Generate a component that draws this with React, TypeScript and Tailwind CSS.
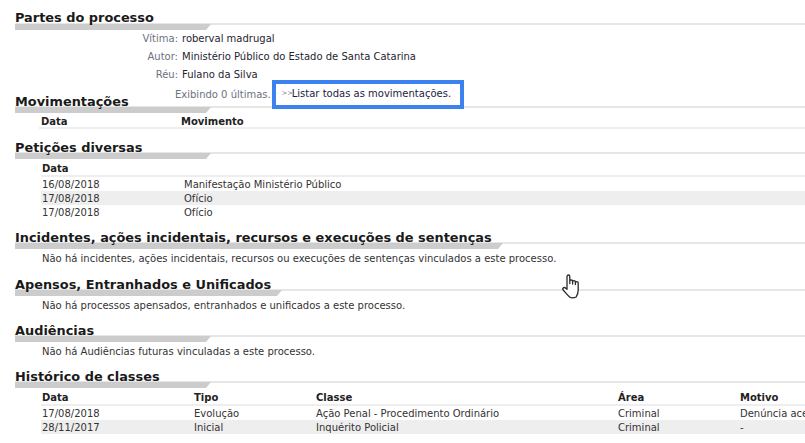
const font = "font-['DejaVu_Sans','Liberation_Sans',sans-serif]";

function Heading({ title, barClass, first }: { title: string; barClass: string; first?: boolean }) {
  return (
    <div className="relative h-[20px] pl-[15px]">
      <div className={`absolute top-[13px] right-0 left-[15px] h-[2px] bg-[#e6e6e6]`} />
      <div className={`absolute top-[14px] left-[15px] h-[6px] bg-[#cccccc] [clip-path:polygon(0_0,100%_0,calc(100%-5px)_100%,0_100%)] ${barClass}`} />
      <h2 className={`relative text-[12.9px] font-bold leading-[15px] text-[#1a1a1a] ${first ? "" : "pt-[1px]"}`}>{title}</h2>
    </div>
  );
}

function Party({ label, name }: { label: string; name: string }) {
  return (
    <div className="flex h-[18px] items-center">
      <span className="w-[178px] text-right text-[#6b7280]">{label}</span>
      <span className="ml-[4px] text-[#1f2430]">{name}</span>
    </div>
  );
}

function Note({ children }: { children: string }) {
  return <p className="mt-[3px] pl-[42px] leading-[14px] text-[#333333]">{children}</p>;
}

const peticoes = [
  { data: "16/08/2018", tipo: "Manifestação Ministério Público" },
  { data: "17/08/2018", tipo: "Ofício" },
  { data: "17/08/2018", tipo: "Ofício" },
];

const classes = [
  { data: "17/08/2018", tipo: "Evolução", classe: "Ação Penal - Procedimento Ordinário", area: "Criminal", motivo: "Denúncia aceita" },
  { data: "28/11/2017", tipo: "Inicial", classe: "Inquérito Policial", area: "Criminal", motivo: "-" },
];

function Hand() {
  return (
    <svg className="absolute top-[273px] left-[561px] z-20" width="21" height="26" viewBox="0 0 21 26" fill="none">
      <path
        d="M6 15V3.5C6 2.5 6.6 2 7.4 2S8.8 2.5 8.8 3.5V10.5V8.2C8.8 7.4 9.5 7 10.2 7S11.6 7.4 11.6 8.2V11V8.8C11.6 8 12.3 7.7 13 7.7S14.4 8 14.4 8.8V11.5V9.8C14.4 9 15.1 8.7 15.8 8.7S17.2 9 17.2 9.8V17C17.2 20 16.2 22.2 15.2 24C13.4 24.8 10 24.9 8.6 24C6.6 22.2 4.6 19.6 2.2 17C1.6 16.2 1.6 15.4 2.2 14.9C3.1 14.3 4 14.5 4.8 15.2L6 16.4Z"
        fill="#ffffff"
        stroke="#2b2b2b"
        strokeWidth="1.3"
        strokeLinejoin="round"
      />
    </svg>
  );
}

export default function App() {
  return (
    <div className={`relative h-[443px] w-[805px] overflow-hidden bg-white pt-[10px] text-[10px] ${font}`}>
      <Heading first title="Partes do processo" barClass="w-[196px]" />
      <div className="mt-[-1px]">
        <Party label="Vítima:" name="roberval madrugal" />
        <Party label="Autor:" name="Ministério Público do Estado de Santa Catarina" />
        <Party label="Réu:" name="Fulano da Silva" />
      </div>
      <div className="relative z-10 mt-[2px] flex h-[18px] items-center pl-[175px]">
        <span className="text-[#6b7280]">Exibindo 0 últimas.</span>
        <a className="mt-[1px] ml-[1px] flex h-[29px] w-[192px] items-center border-4 border-[#3b82f0] bg-white pb-[2px] pl-[6px] text-[#1c2340]">
          <span className="w-[10px] text-[6.5px] text-[#6b7280]">&gt;&gt;</span>Listar todas as movimentações.
        </a>
      </div>
      <div className="mt-[-10px]">
        <Heading title="Movimentações" barClass="w-[196px]" />
      </div>
      <div className="ml-[39px] flex h-[16px] items-center border-b-2 border-[#eeeeee] pt-[2px] pl-[2px] font-bold text-[#222222]">
        <span className="w-[140px]">Data</span>
        <span>Movimento</span>
      </div>
      <div className="mt-[10px]">
        <Heading title="Petições diversas" barClass="w-[196px]" />
      </div>
      <div className="ml-[41px]">
        <div className="flex h-[18px] items-center border-b-2 border-[#eeeeee] pt-[2px] pl-[1px] font-bold text-[#222222]">Data</div>
        {peticoes.map((p, i) => (
          <div key={i} className={`flex h-[14px] items-center pl-[1px] text-[#333333] ${i === 1 ? "bg-[#eeeeee]" : ""}`}>
            <span className="w-[142px]">{p.data}</span>
            <span>{p.tipo}</span>
          </div>
        ))}
      </div>
      <div className="mt-[10px]">
        <Heading title="Incidentes, ações incidentais, recursos e execuções de sentenças" barClass="w-[488px]" />
      </div>
      <Note>Não há incidentes, ações incidentais, recursos ou execuções de sentenças vinculados a este processo.</Note>
      <div className="mt-[10px]">
        <Heading title="Apensos, Entranhados e Unificados" barClass="w-[267px]" />
      </div>
      <Note>Não há processos apensados, entranhados e unificados a este processo.</Note>
      <div className="mt-[9px]">
        <Heading title="Audiências" barClass="w-[196px]" />
      </div>
      <Note>Não há Audiências futuras vinculadas a este processo.</Note>
      <div className="mt-[9px]">
        <Heading title="Histórico de classes" barClass="w-[196px]" />
      </div>
      <div className="ml-[41px]">
        <div className="flex h-[18px] items-center border-b-2 border-[#eeeeee] pt-[2px] pl-[1px] font-bold text-[#222222]">
          <span className="w-[152px] shrink-0">Data</span>
          <span className="w-[122px] shrink-0">Tipo</span>
          <span className="w-[302px] shrink-0">Classe</span>
          <span className="w-[122px] shrink-0">Área</span>
          <span className="shrink-0">Motivo</span>
        </div>
        {classes.map((c, i) => (
          <div key={i} className={`flex h-[14px] items-center whitespace-nowrap pl-[1px] text-[#333333] ${i === 1 ? "bg-[#eeeeee]" : ""}`}>
            <span className="w-[152px] shrink-0">{c.data}</span>
            <span className="w-[122px] shrink-0">{c.tipo}</span>
            <span className="w-[302px] shrink-0">{c.classe}</span>
            <span className="w-[122px] shrink-0">{c.area}</span>
            <span className="shrink-0">{c.motivo}</span>
          </div>
        ))}
      </div>
      <Hand />
    </div>
  );
}
